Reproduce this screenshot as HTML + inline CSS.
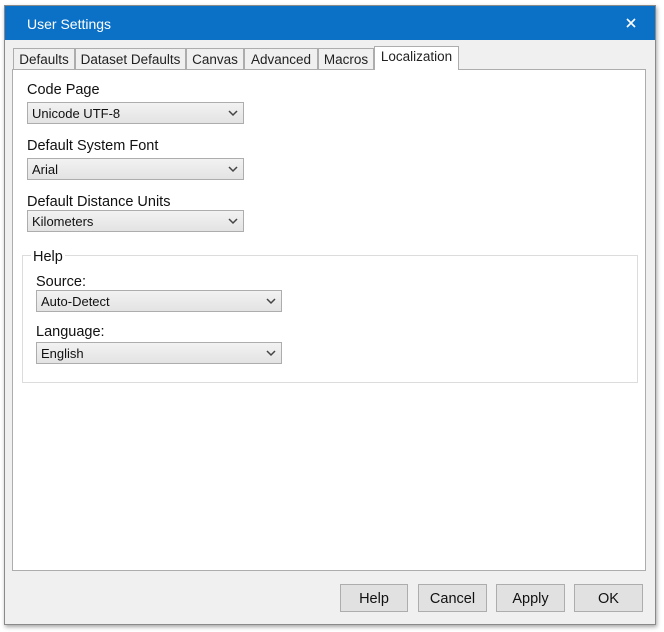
<html><head><style>
body{margin:0;width:664px;height:632px;background:#fff;position:relative;overflow:hidden;font-family:"Liberation Sans",sans-serif}
.a{position:absolute}
.win{left:4px;top:5px;width:650px;height:618px;background:#f0f0f0;border:1px solid #8a8a8a;box-shadow:1px 2px 4px rgba(0,0,0,.35)}
.title{left:0;top:0;width:650px;height:34px;background:#0b71c6;color:#fff;font-size:14px}
.tab{top:42px;height:21px;border:1px solid #adadad;background:#f0f0f0;font-size:13.5px;line-height:22px;text-align:center;color:#222;white-space:nowrap}
.panel{left:7px;top:63px;width:632px;height:500px;background:#fff;border:1px solid #adadad}
.lbl{font-size:14.5px;color:#111}
.cb{height:22px;border:1px solid #adadad;background:linear-gradient(#f2f2f2,#e3e3e3);font-size:13px;line-height:22px;padding-left:4px;box-sizing:border-box;color:#111}
.cb svg{position:absolute;right:5px;top:7px}
.btn{top:578px;height:28px;width:68px;border:1px solid #adadad;background:#e1e1e1;font-size:14.5px;line-height:29px;text-align:center;color:#111;box-sizing:border-box}
</style></head><body>
<div class="a win">
<div class="a title"><span class="a" style="left:22px;top:10px">User Settings</span><svg class="a" style="left:621px;top:12px" width="10" height="10"><path d="M1 1L9 9M9 1L1 9" stroke="#fff" stroke-width="1.6"/></svg></div>
<div class="a tab" style="left:8px;width:60px">Defaults</div>
<div class="a tab" style="left:70px;width:109px">Dataset Defaults</div>
<div class="a tab" style="left:181px;width:56px">Canvas</div>
<div class="a tab" style="left:239px;width:72px">Advanced</div>
<div class="a tab" style="left:313px;width:54px">Macros</div>
<div class="a panel"></div>
<div class="a tab" style="left:369px;top:40px;height:23px;width:83px;background:#fff;border-bottom:none;line-height:20px;z-index:2">Localization</div>
<div class="a lbl" style="left:22px;top:76px">Code Page</div>
<div class="a cb" style="left:22px;top:96px;width:217px">Unicode UTF-8<svg width="10" height="7"><path d="M1 1l4 4 4-4" stroke="#444" stroke-width="1.5" fill="none"/></svg></div>
<div class="a lbl" style="left:22px;top:132px">Default System Font</div>
<div class="a cb" style="left:22px;top:152px;width:217px">Arial<svg width="10" height="7"><path d="M1 1l4 4 4-4" stroke="#444" stroke-width="1.5" fill="none"/></svg></div>
<div class="a lbl" style="left:22px;top:188px">Default Distance Units</div>
<div class="a cb" style="left:22px;top:204px;width:217px">Kilometers<svg width="10" height="7"><path d="M1 1l4 4 4-4" stroke="#444" stroke-width="1.5" fill="none"/></svg></div>
<div class="a" style="left:17px;top:249px;width:614px;height:126px;border:1px solid #dcdcdc;background:#fff"></div>
<div class="a lbl" style="left:26px;top:243px;background:#fff;padding:0 2px">Help</div>
<div class="a lbl" style="left:31px;top:268px">Source:</div>
<div class="a cb" style="left:31px;top:284px;width:246px">Auto-Detect<svg width="10" height="7"><path d="M1 1l4 4 4-4" stroke="#444" stroke-width="1.5" fill="none"/></svg></div>
<div class="a lbl" style="left:31px;top:318px">Language:</div>
<div class="a cb" style="left:31px;top:336px;width:246px">English<svg width="10" height="7"><path d="M1 1l4 4 4-4" stroke="#444" stroke-width="1.5" fill="none"/></svg></div>
<div class="a btn" style="left:335px">Help</div>
<div class="a btn" style="left:413px;width:69px">Cancel</div>
<div class="a btn" style="left:491px;width:69px">Apply</div>
<div class="a btn" style="left:569px;width:69px">OK</div>
</div>
</body></html>
